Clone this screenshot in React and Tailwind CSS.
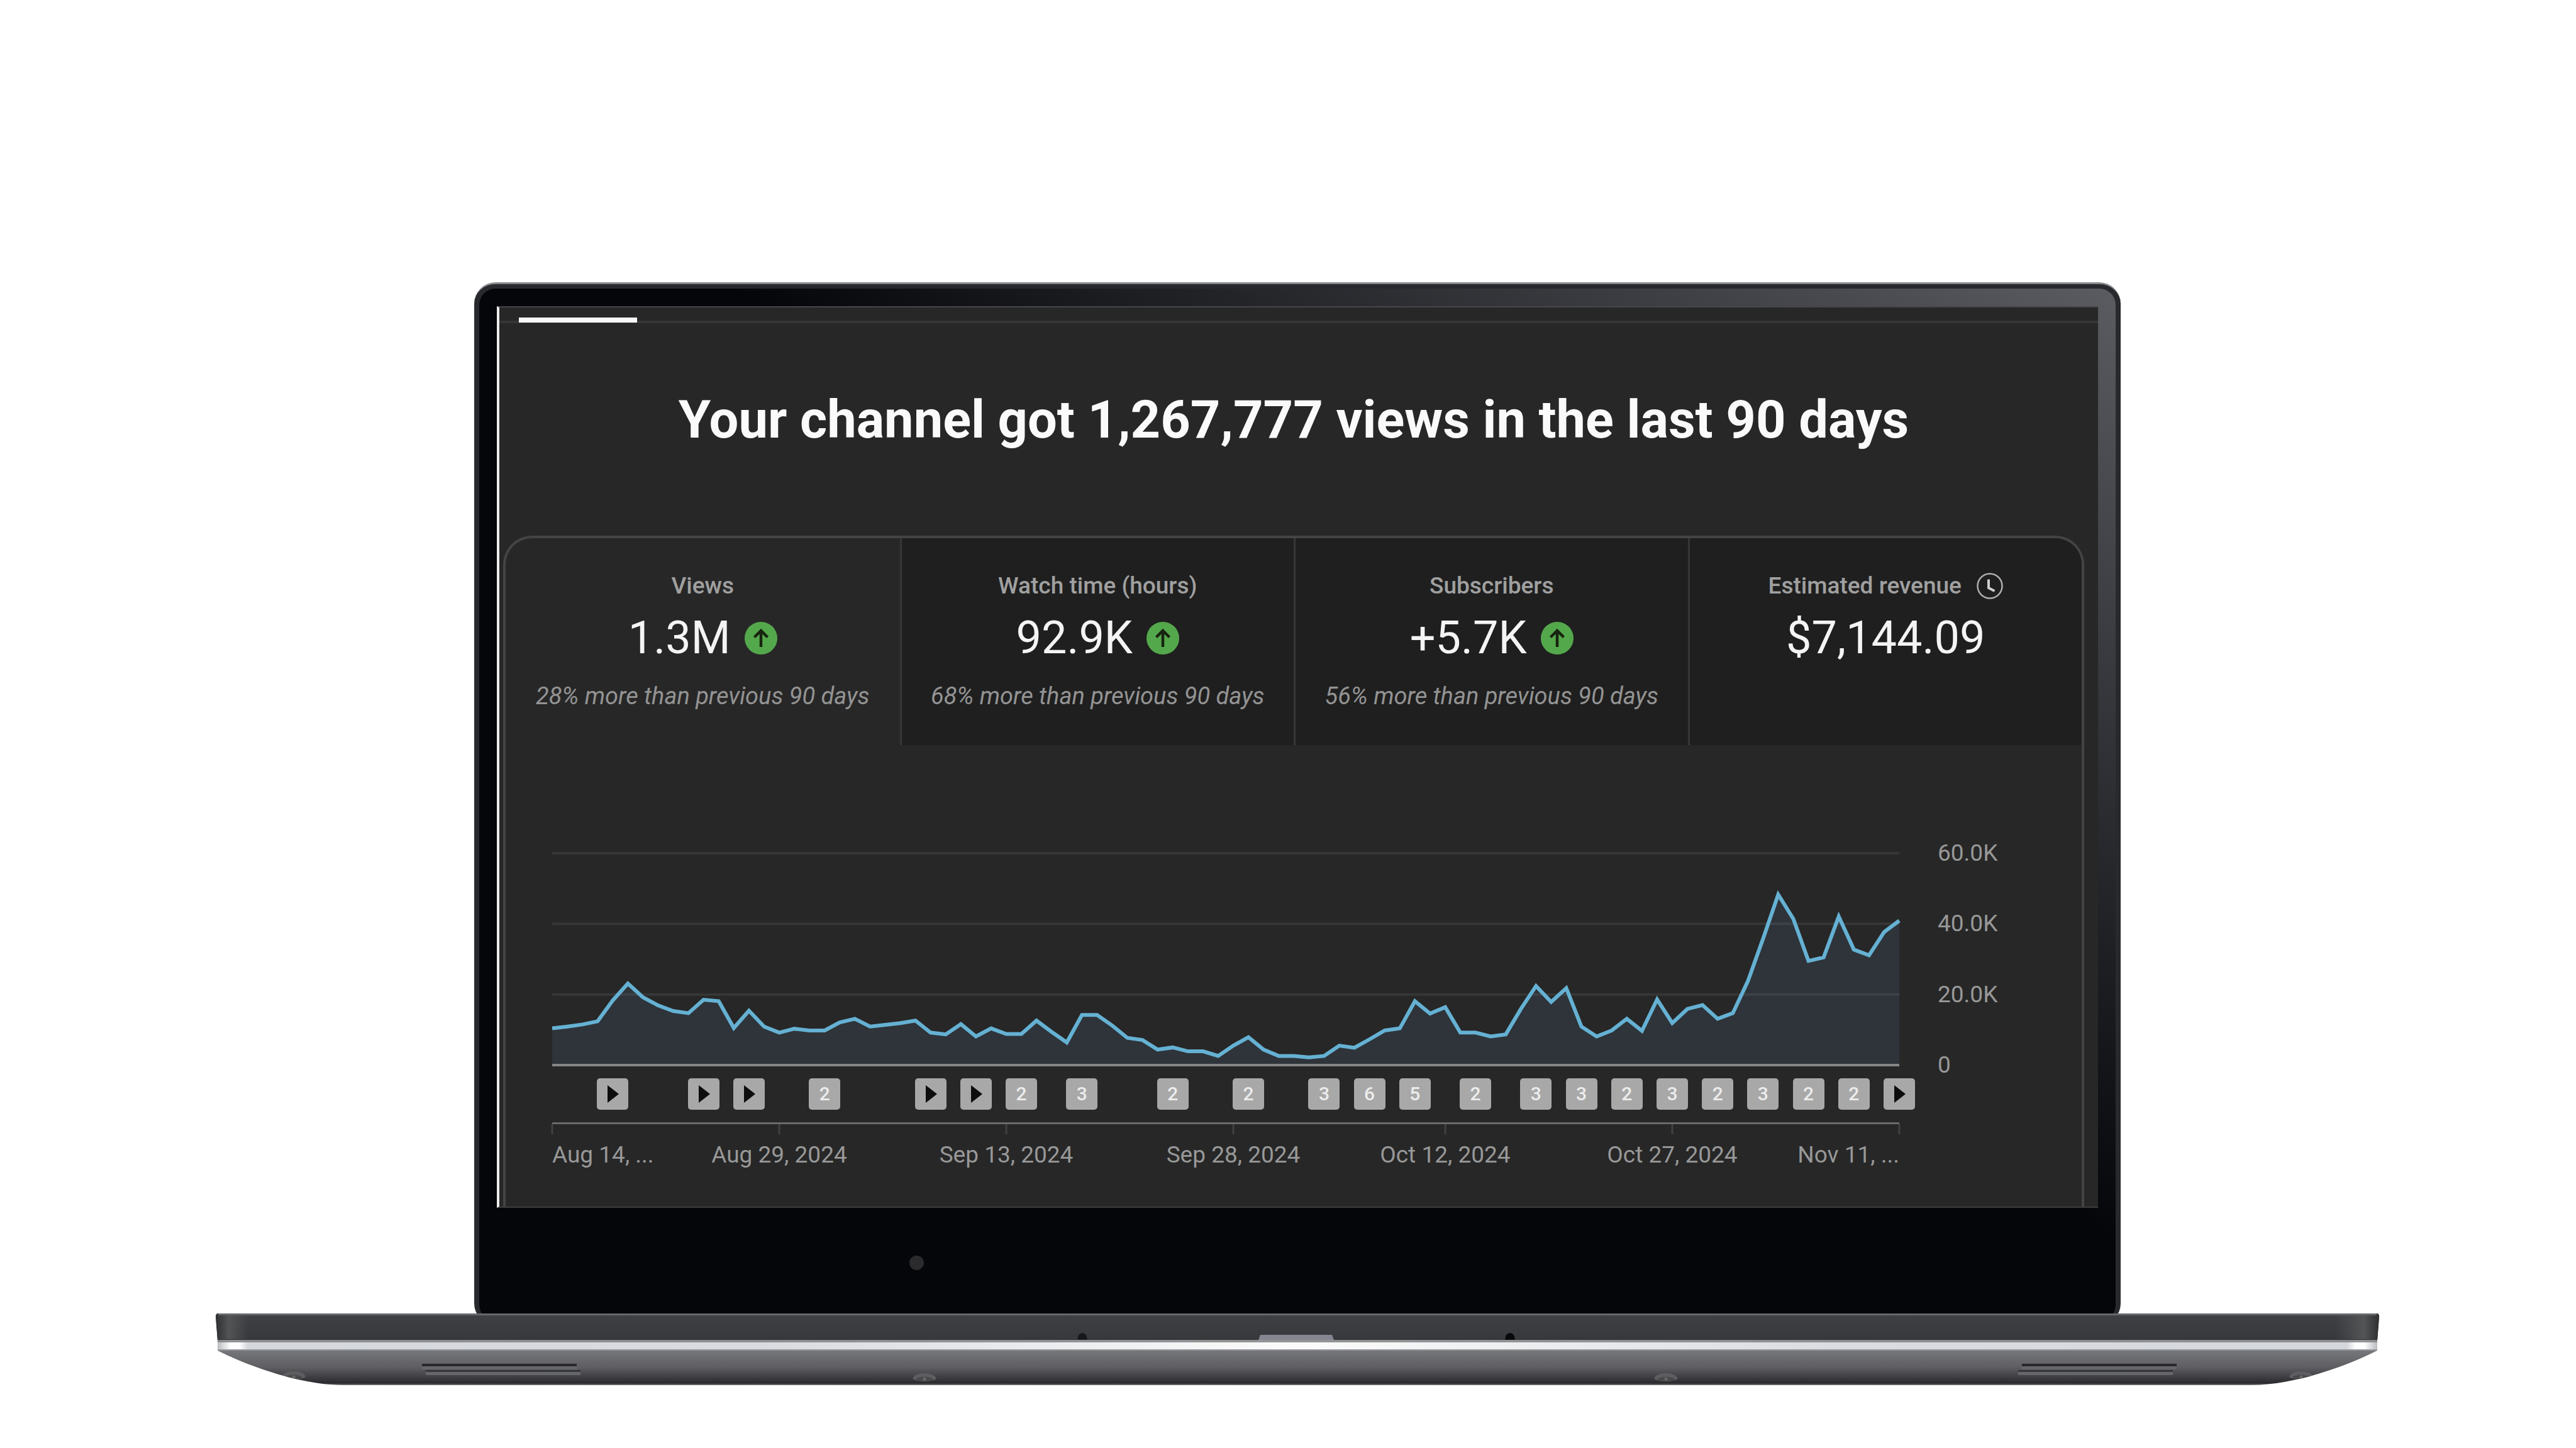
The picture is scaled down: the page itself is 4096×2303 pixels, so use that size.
import React from "react";

const VIEWS = [
  10.4, 10.9, 11.5, 12.4, 18.3, 23.1, 19.2, 16.9, 15.3, 14.7, 18.5, 18.1, 10.5, 15.4, 10.9,
  9.2, 10.3, 9.8, 9.8, 12.1, 13.1, 10.9, 11.4, 11.9, 12.6, 9.2, 8.7, 11.6, 8.1, 10.4,
  8.8, 8.8, 12.6, 9.4, 6.4, 14.2, 14.2, 11.2, 7.7, 7.1, 4.4, 5.0, 3.9, 3.9, 2.6,
  5.5, 7.9, 4.4, 2.6, 2.6, 2.2, 2.6, 5.5, 4.9, 7.3, 9.8, 10.4, 18.1, 14.6, 16.4,
  9.2, 9.2, 8.1, 8.7, 15.9, 22.4, 17.9, 21.8, 10.9, 8.1, 9.8, 13.1, 9.7, 18.6, 11.9,
  15.9, 17.0, 13.1, 14.7, 23.8, 35.8, 48.3, 41.4, 29.5, 30.5, 42.1, 32.7, 31.1, 37.7, 40.9,
];
const LAST_DAY = VIEWS.length - 1;
const MAX_VIEWS = 60;

const UPLOADS = [
  [4, 1], [10, 1], [13, 1], [18, 2], [25, 1], [28, 1], [31, 2], [35, 3], [41, 2], [46, 2],
  [51, 3], [54, 6], [57, 5], [61, 2], [65, 3], [68, 3], [71, 2], [74, 3], [77, 2], [80, 3],
  [83, 2], [86, 2], [89, 1],
];

const DATES = [
  { day: 0, text: "Aug 14, ...", align: "" },
  { day: 15, text: "Aug 29, 2024", align: "-translate-x-1/2" },
  { day: 30, text: "Sep 13, 2024", align: "-translate-x-1/2" },
  { day: 45, text: "Sep 28, 2024", align: "-translate-x-1/2" },
  { day: 59, text: "Oct 12, 2024", align: "-translate-x-1/2" },
  { day: 74, text: "Oct 27, 2024", align: "-translate-x-1/2" },
  { day: 89, text: "Nov 11, ...", align: "-translate-x-full" },
];

const METRICS = [
  { label: "Views", value: "1.3M", up: true, note: "28% more than previous 90 days" },
  { label: "Watch time (hours)", value: "92.9K", up: true, note: "68% more than previous 90 days" },
  { label: "Subscribers", value: "+5.7K", up: true, note: "56% more than previous 90 days" },
  { label: "Estimated revenue", value: "$7,144.09", clock: true },
];

const dayLeft = (day) => ({ left: `${(day / LAST_DAY) * 100}%` });

function UpIcon() {
  return (
    <svg viewBox="0 0 52 52" className="size-[52px]" aria-label="Up">
      <circle cx="26" cy="26" r="26" fill="#54a84c" />
      <path d="M26 40V14M15.5 24.5 26 14l10.5 10.5" fill="none" stroke="#17240f" strokeWidth="4.5" />
    </svg>
  );
}

function ClockIcon() {
  return (
    <svg viewBox="0 0 42 42" className="size-[42px]" aria-hidden="true">
      <circle cx="21" cy="21" r="19.5" fill="none" stroke="#b0b0b0" strokeWidth="2.5" />
      <path d="M19 10.5V24l9.5 5" fill="none" stroke="#cfcfcf" strokeWidth="4" />
    </svg>
  );
}

function MetricTab({ metric, selected }) {
  return (
    <button
      type="button"
      role="tab"
      aria-selected={selected}
      className={
        selected
          ? "flex flex-col items-center pt-[55px] pb-[57px]"
          : "flex flex-col items-center border-l-3 border-[#373737] bg-[#1f1f1f] pt-[55px] pb-[57px]"
      }
    >
      <span className="flex items-center gap-[24px] text-[37px] leading-[42px] font-medium text-[#a0a0a0]">
        {metric.label}
        {metric.clock && <ClockIcon />}
      </span>
      <span className="mt-[20px] flex items-center gap-[22px] text-[72px] leading-[84px] text-[#f4f4f4]">
        {metric.value}
        {metric.up && <UpIcon />}
      </span>
      <span className="mt-[29px] h-[42px] text-[38px] leading-[42px] text-[#939393] italic">{metric.note}</span>
    </button>
  );
}

function ViewsPlot() {
  const points = VIEWS.map((v, day) => `${day},${MAX_VIEWS - v}`);
  return (
    <svg
      viewBox={`0 0 ${LAST_DAY} ${MAX_VIEWS}`}
      preserveAspectRatio="none"
      className="block h-[337px] w-full overflow-visible"
      role="img"
      aria-label="Daily views"
    >
      <polygon points={`0,60 ${points.join(" ")} ${LAST_DAY},60`} fill="#2e343a" />
      {[0, 20, 40].map((y) => (
        <line key={y} x1="0" x2={LAST_DAY} y1={y} y2={y} stroke="#ffffff" strokeOpacity="0.07" strokeWidth="4" vectorEffect="non-scaling-stroke" />
      ))}
      <line x1="0" x2={LAST_DAY} y1="60" y2="60" stroke="#848688" strokeWidth="4" vectorEffect="non-scaling-stroke" />
      <polyline points={points.join(" ")} fill="none" stroke="#65b1d3" strokeWidth="6" strokeLinejoin="miter" vectorEffect="non-scaling-stroke" />
    </svg>
  );
}

function UploadMarker({ day, count }) {
  return (
    <button
      type="button"
      style={dayLeft(day)}
      aria-label={`${count} published`}
      className="absolute top-0 flex size-[50px] -translate-x-1/2 items-center justify-center rounded-[5px] bg-[#a8a8a8] text-[30px] leading-[36px] font-medium text-[#ececec]"
    >
      {count > 1 ? (
        count
      ) : (
        <svg viewBox="0 0 18 28" className="ml-[2px] h-[28px] w-[18px]" aria-hidden="true">
          <path d="M0 0 18 14 0 28Z" fill="#0d0d0d" />
        </svg>
      )}
    </button>
  );
}

function Chart() {
  return (
    <div className="grid grid-cols-[1fr_290px] pt-[172px] pb-[61px] pl-[74px] text-[37px] leading-[42px] text-[#989898]">
      <div>
        <ViewsPlot />
        <div className="relative mt-[21px] h-[50px]">
          {UPLOADS.map(([day, count]) => (
            <UploadMarker key={day} day={day} count={count} />
          ))}
        </div>
        <div className="relative mt-[20px] h-[73px] border-t-3 border-[#6a6a6a]">
          {DATES.map((d) => (
            <React.Fragment key={d.day}>
              <span style={dayLeft(d.day)} className="absolute top-0 h-[16px] w-[3px] -translate-x-1/2 bg-[#414141]" />
              <span style={dayLeft(d.day)} className={`absolute top-[28px] whitespace-nowrap ${d.align}`}>
                {d.text}
              </span>
            </React.Fragment>
          ))}
        </div>
      </div>
      <div className="-mt-[21px] flex h-[379px] flex-col justify-between pl-[61px]">
        <span>60.0K</span>
        <span>40.0K</span>
        <span>20.0K</span>
        <span>0</span>
      </div>
    </div>
  );
}

function Screen() {
  return (
    <section className="border-t-2 border-b-2 border-l-4 border-t-[#46474a] border-b-[#3c3c3c] border-l-[#ededed] bg-[#272727]">
      <div className="relative h-[25px] border-b-4 border-[#363636]">
        <span className="absolute -bottom-[3px] left-[31px] h-[8px] w-[188px] bg-[#f6f6f6]" />
      </div>
      <div className="mr-[22px] ml-[6px]">
        <h1 className="pt-[102px] text-center text-[83px] leading-[104px] font-bold text-[#fafafa]">
          Your channel got 1,267,777 views in the last 90 days
        </h1>
        <div className="mt-[132px] overflow-hidden rounded-t-[46px] border-4 border-b-0 border-[#444444]">
          <div role="tablist" className="grid grid-cols-4">
            {METRICS.map((m, i) => (
              <MetricTab key={m.label} metric={m} selected={i === 0} />
            ))}
          </div>
          <Chart />
        </div>
      </div>
    </section>
  );
}

function Foot({ x, y }) {
  return (
    <g>
      <path d={`M${x - 19} ${y + 6}C${x - 16} ${y - 6} ${x + 16} ${y - 6} ${x + 19} ${y + 6}Q${x + 12} ${y + 10} ${x} ${y + 10}T${x - 19} ${y + 6}Z`} fill="#5e5e61" />
      <path d={`M${x - 13} ${y + 5}Q${x} ${y} ${x + 13} ${y + 5}V${y + 9}H${x - 13}Z`} fill="#49494c" />
      <circle cx={x} cy={y + 6} r="2.5" fill="#69696c" />
    </g>
  );
}

function Vent({ x, shift }) {
  return (
    <g>
      <rect x={x} y="80" width="246" height="4" fill="#27272c" />
      <rect x={x} y="84" width="246" height="5" fill="#66676b" />
      <rect x={x + shift} y="90" width="246" height="3" fill="#35353a" />
      <rect x={x + shift} y="93" width="246" height="5" fill="#66676b" />
    </g>
  );
}

function LaptopBase() {
  return (
    <svg viewBox="0 0 3440 114" className="relative -mt-[18px] block h-auto w-full" aria-hidden="true">
      <defs>
        <linearGradient id="deck" x1="0" x2="0" y1="0" y2="1">
          <stop offset="0" stopColor="#404145" />
          <stop offset="1" stopColor="#37383c" />
        </linearGradient>
        <linearGradient id="deckEnds" x1="0" x2="1" y1="0" y2="0">
          <stop offset="0" stopColor="#2e2f31" />
          <stop offset="0.006" stopColor="#535455" />
          <stop offset="0.015" stopColor="#535455" stopOpacity="0" />
          <stop offset="0.98" stopColor="#535455" stopOpacity="0" />
          <stop offset="0.993" stopColor="#535455" />
          <stop offset="1" stopColor="#2e2f31" />
        </linearGradient>
        <linearGradient id="strip" x1="0" x2="1" y1="0" y2="0">
          <stop offset="0" stopColor="#b9bcc0" />
          <stop offset="0.006" stopColor="#ffffff" />
          <stop offset="0.01" stopColor="#ffffff" />
          <stop offset="0.014" stopColor="#d4d7dc" />
          <stop offset="0.25" stopColor="#d9dbe0" />
          <stop offset="0.5" stopColor="#fbfbfb" />
          <stop offset="0.75" stopColor="#dadce1" />
          <stop offset="0.986" stopColor="#d4d7dc" />
          <stop offset="0.99" stopColor="#ffffff" />
          <stop offset="0.994" stopColor="#ffffff" />
          <stop offset="1" stopColor="#b9bcc0" />
        </linearGradient>
        <linearGradient id="hull" x1="0" x2="0" y1="0" y2="1">
          <stop offset="0" stopColor="#75777a" />
          <stop offset="0.48" stopColor="#5f5e62" />
          <stop offset="0.95" stopColor="#2a2a2e" />
          <stop offset="0.97" stopColor="#5a5a5d" />
          <stop offset="1" stopColor="#6a6a6d" />
        </linearGradient>
        <clipPath id="hullShape">
          <path d="M3 59H3437C3390 83 3305 114 3237 114H203C135 114 50 83 3 59Z" />
        </clipPath>
      </defs>
      <path d="M4 0H3436Q3440 0 3440 5L3437 43H3L0 5Q0 0 4 0Z" fill="url(#deck)" />
      <path d="M4 0H3436Q3440 0 3440 5L3437 43H3L0 5Q0 0 4 0Z" fill="url(#deckEnds)" />
      <rect x="4" y="0" width="3432" height="3" fill="#67686c" />
      <rect x="3" y="41" width="3434" height="2" fill="#2c2d30" />
      <path d="M1661 34H1775L1778 42H1658Z" fill="#858592" />
      <path d="M1370 42Q1371 31 1378 31T1386 42Z" fill="#17181b" />
      <path d="M2050 42Q2051 31 2058 31T2066 42Z" fill="#08090b" />
      <rect x="3" y="42" width="3434" height="17" fill="url(#strip)" />
      <rect x="3" y="42" width="3434" height="4" fill="#7f8184" fillOpacity="0.85" />
      <rect x="3" y="57" width="3434" height="2" fill="#97999c" />
      <g clipPath="url(#hullShape)">
        <rect x="0" y="59" width="3440" height="55" fill="url(#hull)" />
        <Vent x={328} shift={6} />
        <Vent x={2872} shift={-6} />
        <Foot x={1127} y={98} />
        <Foot x={2306} y={98} />
        <Foot x={124} y={95} />
        <Foot x={3316} y={95} />
      </g>
    </svg>
  );
}

export default function App() {
  return (
    <main className="min-h-screen bg-white pt-[449px] pr-[313px] pl-[343px] font-['Roboto',sans-serif]">
      <div className="mx-[411px] rounded-[34px] border-t-3 border-[#85878b] bg-[#27292d] px-[8px] pt-[7px] pb-[6px]">
        <div className="rounded-[26px] bg-[linear-gradient(34.6deg,#05060a_56%,#5b5c61_100%)] px-[28px] pt-[28px] pb-[6px]">
          <Screen />
          <div className="flex h-[174px] items-center">
            <span className="ml-[656px] size-[23px] rounded-full bg-[#2b2b2e]" />
          </div>
        </div>
      </div>
      <LaptopBase />
    </main>
  );
}
